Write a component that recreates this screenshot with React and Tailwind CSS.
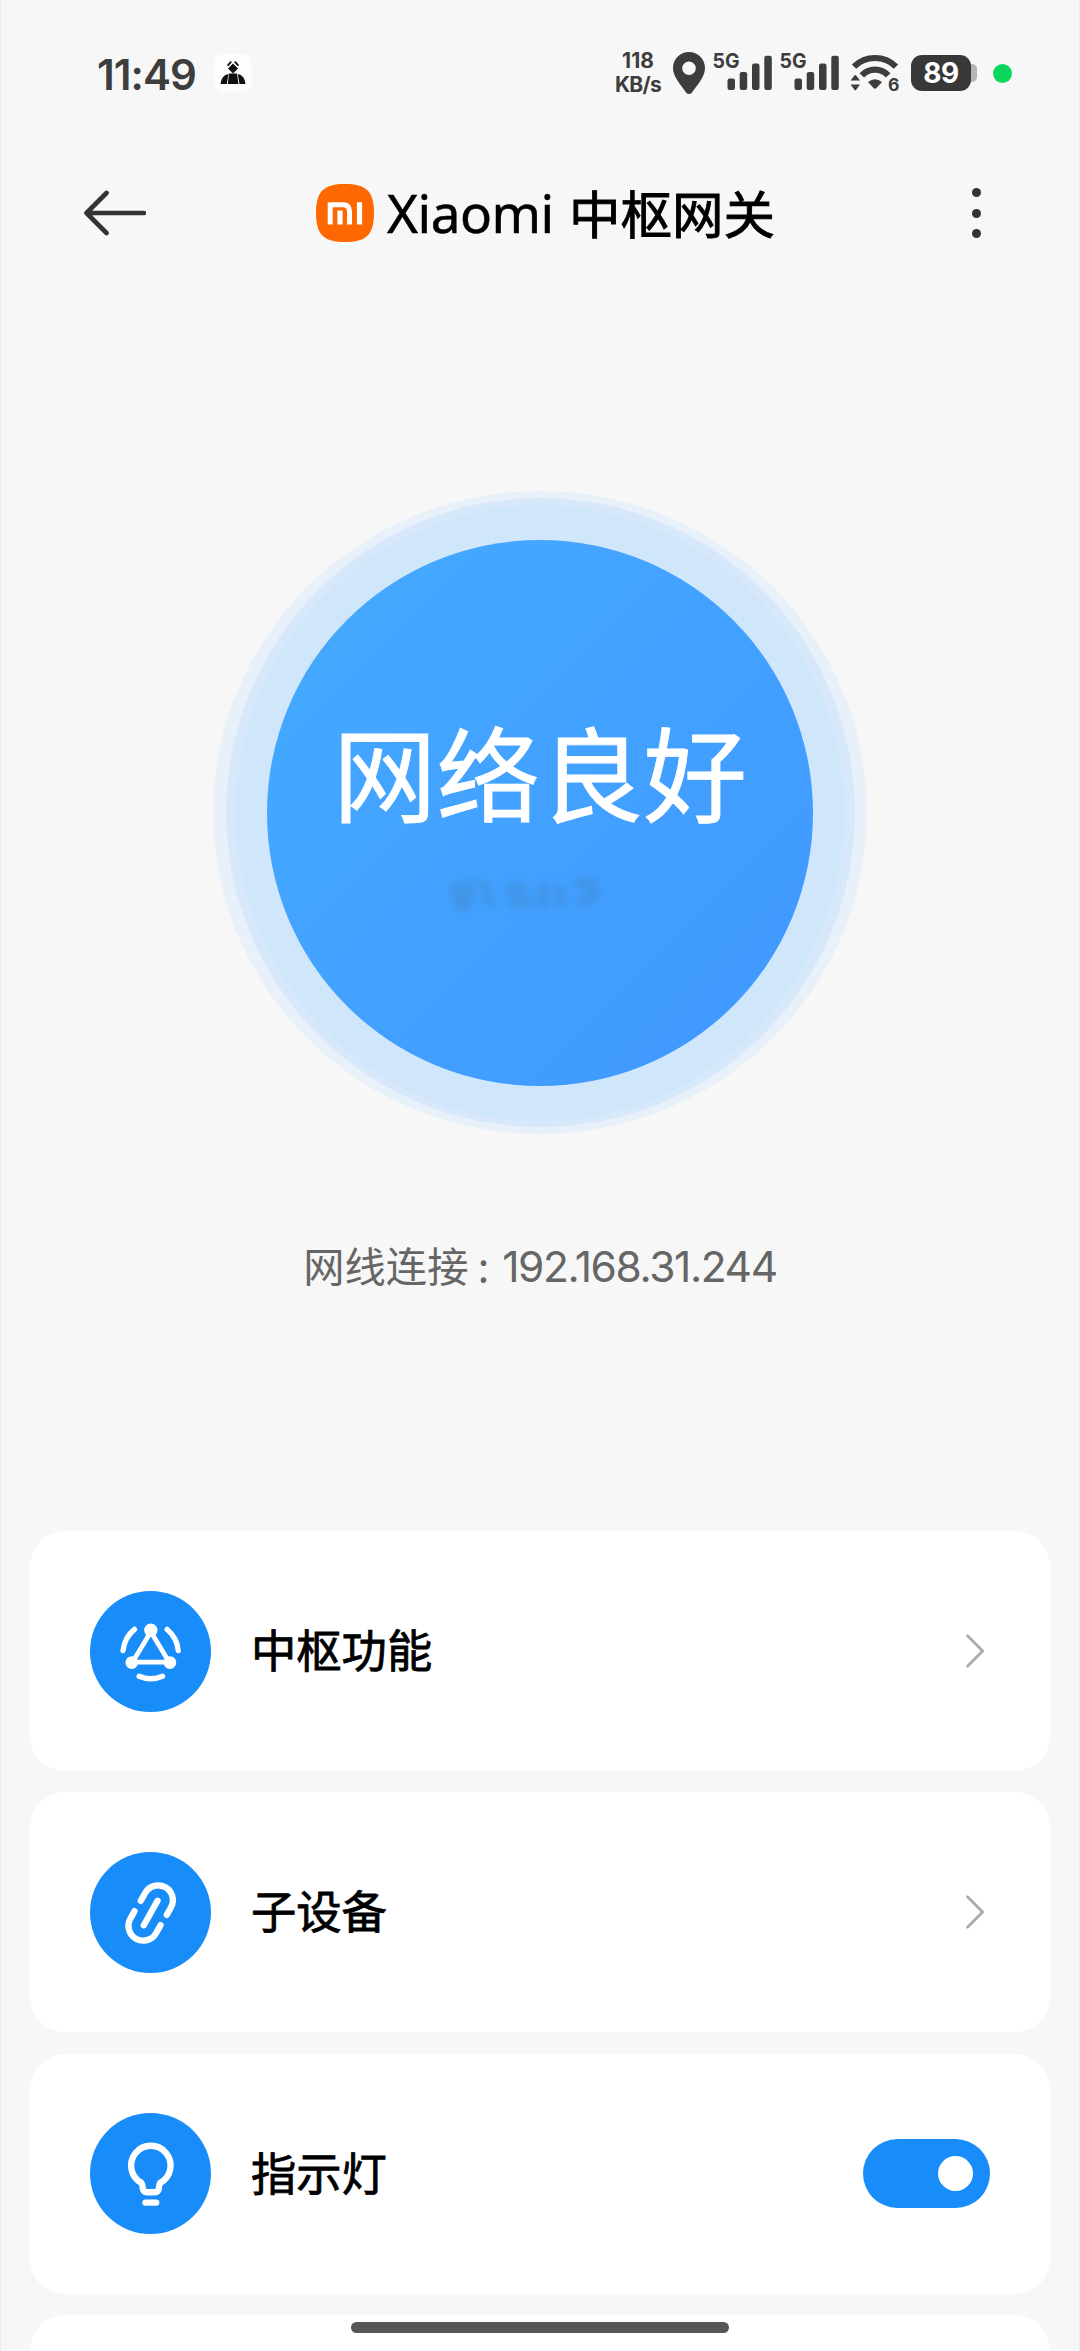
import { useState } from 'react'

function SignalIcon() {
  return (
    <svg className="w-[62px] h-[42px] overflow-visible" viewBox="0 0 62 42" fill="#3d3d3d">
      <text x="0.5" y="15.8" fontSize="20.5" fontWeight="700" textLength="27" lengthAdjust="spacingAndGlyphs" className="font-['Inter',sans-serif]">5G</text>
      <rect x="15.5" y="26.5" width="7.5" height="11.5" rx="2.2" />
      <rect x="27.7" y="20" width="7.5" height="18" rx="2.2" />
      <rect x="40" y="11.5" width="7.5" height="26.5" rx="2.2" />
      <rect x="52.3" y="3.8" width="7.5" height="34.2" rx="2.2" />
    </svg>
  )
}

function WifiIcon() {
  return (
    <svg className="w-[50px] h-[38px] ml-[9px] overflow-visible" viewBox="0 0 50 38" fill="none">
      <path d="M4 12.6 A30 30 0 0 1 46 12.6" stroke="#3d3d3d" strokeWidth="6.2" />
      <path d="M11.8 21.4 A18 18 0 0 1 38.2 21.4" stroke="#3d3d3d" strokeWidth="6.2" />
      <path d="M18 28 Q25 22.5 32 28 L26.5 34 Q25 35.4 23.5 34 Z" fill="#3d3d3d" />
      <path d="M0.6 26.5 L4.4 21.6 Q5.3 20.6 6.2 21.6 L10 26.5 Z" fill="#3d3d3d" />
      <path d="M0.6 30.5 L4.4 35.8 Q5.3 36.8 6.2 35.8 L10 30.5 Z" fill="#3d3d3d" />
      <text x="38" y="36.6" fontSize="17.5" fontWeight="700" fill="#3d3d3d" className="font-['Inter',sans-serif]">6</text>
    </svg>
  )
}

function StatusBar() {
  return (
    <div className="flex items-center h-[146px] pl-[97px] text-[#3d3d3d] font-['Inter',sans-serif]">
      <div className="w-[117px] pt-[3px] text-[42px] leading-none font-semibold tracking-[-1px] whitespace-nowrap">11:49</div>
      <div className="w-[38px] h-[38px] rounded-[10px] bg-white/80">
        <svg className="w-full h-full" viewBox="0 0 38 38" fill="#111">
          <path d="M19 9.5 L24 14.5 L19 19.5 L14 14.5 Z" />
          <path d="M13.6 11.6 L17.2 7.6 M24.4 11.6 L20.8 7.6" stroke="#111" strokeWidth="1.8" />
          <path d="M6.5 30 Q7.5 21 14.5 20 L12.8 30 Z M13.8 30 L15 19.5 H23 L24.5 30 Z M25.5 30 L23.8 20 Q30.5 21 31.5 30 Z" />
        </svg>
      </div>

      <div className="ml-[361px] w-[50px] flex flex-col items-center font-bold text-[21px] leading-[24px]">
        <span>118</span>
        <span className="tracking-[-0.7px]">KB/s</span>
      </div>
      <svg className="w-8 h-[42px] ml-[10px]" viewBox="0 0 32 42">
        <path fillRule="evenodd" fill="#3d3d3d" d="M16 0 C7 0 0 7 0 16 C0 24.5 7 32 13 40.5 Q16 43.5 19 40.5 C25 32 32 24.5 32 16 C32 7 25 0 16 0 Z M16 9.5 a6.8 6.8 0 1 1 0 13.6 a6.8 6.8 0 1 1 0 -13.6 Z" />
      </svg>
      <div className="flex gap-[5px] ml-[7px]">
        <SignalIcon />
        <SignalIcon />
      </div>
      <WifiIcon />
      <div className="ml-[11px] flex items-center">
        <div className="w-[60px] h-9 rounded-[11px] bg-[#383838] text-white font-bold text-[28px] tracking-[-0.5px] flex items-center justify-center">
          89
        </div>
        <div className="w-[6px] h-[18px] rounded-r-[5px] bg-[#b5b5b5]" />
      </div>
      <div className="ml-4 w-[19px] h-[19px] rounded-full bg-[#0bd65c]" />
    </div>
  )
}

function Header() {
  return (
    <div className="flex items-center h-[134px] pl-[84px] pr-[99px]">
      <svg className="w-[62px] h-[46px]" viewBox="0 0 62 46" fill="none" stroke="#333" strokeWidth="4.6" strokeLinecap="round" strokeLinejoin="round">
        <path d="M22.5 3 L2.5 23 L22.5 43 M2.5 23 H60" />
      </svg>
      <svg className="w-[58px] h-[58px] ml-[170px]" viewBox="0 0 58 58">
        <path d="M29 0 C50 0 58 7 58 29 C58 51 50 58 29 58 C8 58 0 51 0 29 C0 7 8 0 29 0 Z" fill="#ff6700" />
        <path d="M14.2 40.5 V20.7 H27 Q33.5 20.7 33.5 27.5 V40.5" fill="none" stroke="#fff" strokeWidth="5" />
        <path d="M24 26.5 V40.5 M43.5 18.2 V40.5" stroke="#fff" strokeWidth="5.2" />
      </svg>
      <h1 className="ml-[13px] flex items-center whitespace-nowrap text-black font-normal">
        <span className="w-[182px] text-[53px] tracking-[-0.5px] font-['Noto_Sans',sans-serif] [-webkit-text-stroke:0.5px_black]">Xiaomi</span>
        <span className="pb-[3px] text-[51.5px] font-['Noto_Sans_CJK_SC',sans-serif] [-webkit-text-stroke:0.9px_black]">中枢网关</span>
      </h1>
      <div className="ml-auto flex flex-col items-center gap-[11.5px]">
        <span className="w-[9px] h-[9px] rounded-full bg-[#333]" />
        <span className="w-[9px] h-[9px] rounded-full bg-[#333]" />
        <span className="w-[9px] h-[9px] rounded-full bg-[#333]" />
      </div>
    </div>
  )
}

function NetworkStatus() {
  return (
    <div className="mt-[211px] flex flex-col items-center">
      <div className="w-[654px] h-[643px] rounded-[50%] bg-[#e8f1fa] flex items-center justify-center">
        <div className="w-[629px] h-[629px] rounded-[50%] bg-[#d8e8fb] flex items-center justify-center">
          <div className="w-[608px] h-[616px] rounded-[50%] bg-[#d0e6fa] flex items-center justify-center">
            <div className="w-[546px] h-[546px] rounded-full bg-linear-to-br from-[#45abff] to-[#4097ff] flex flex-col items-center pt-[178px]">
              <div className="text-white text-[103.5px] leading-[104px] font-normal font-['Noto_Sans_CJK_SC',sans-serif] [-webkit-text-stroke:0.9px_white]">网络良好</div>
              <svg className="w-[170px] h-[50px] mt-[48px] mr-6 blur-[4px]" viewBox="0 0 170 50" fill="none" stroke="#4088cc" strokeWidth="9" opacity="0.55">
                <path d="M12 12 L16 38 M28 10 L22 40 M40 12 L48 36 M62 18 H84 M66 32 H90 M100 12 V38 M114 16 L120 36 M132 14 H154 M136 34 L156 22" />
              </svg>
            </div>
          </div>
        </div>
      </div>
      <div className="mt-[103px] h-[60px] flex items-center text-[#666] whitespace-nowrap">
        <span className="pb-1 text-[41.3px] font-['Noto_Sans_CJK_SC',sans-serif]">网线连接 :</span>
        <span className="ml-[13px] text-[42.5px] tracking-[-1.4px] font-['Inter',sans-serif]">192.168.31.244</span>
      </div>
    </div>
  )
}

function HubIcon() {
  return (
    <svg className="w-[121px] h-[121px]" viewBox="0 0 362 362" fill="none" stroke="#fff" strokeLinecap="round" strokeLinejoin="round">
      <path d="M182 122 L127 213 H237 Z" strokeWidth="14" />
      <path d="M133 115 Q103 139 99 178 M231 115 Q260 139 264 178 M147 255 Q182 270 217 255" strokeWidth="16" />
      <circle cx="182" cy="117" r="20" fill="#fff" stroke="none" />
      <circle cx="125" cy="214" r="19" fill="#fff" stroke="none" />
      <circle cx="239" cy="214" r="19" fill="#fff" stroke="none" />
    </svg>
  )
}

function LinkIcon() {
  return (
    <svg className="w-[121px] h-[121px]" viewBox="0 0 362 362" fill="none" stroke="#fff" strokeWidth="19" strokeLinecap="round">
      <path d="M152 146 L165.5 122 A44 44 0 0 1 242 166 L230 188" />
      <path d="M202 146 L161 219" />
      <path d="M211 219 L197.5 243 A44 44 0 0 1 121 199 L133 177" />
    </svg>
  )
}

function BulbIcon() {
  return (
    <svg className="w-[121px] h-[121px]" viewBox="0 0 362 362" fill="none" stroke="#fff" strokeWidth="19" strokeLinecap="round" strokeLinejoin="round">
      <path d="M154 209 A59 59 0 1 1 210 209 Q207 214 206 226 Q204 237 194 237 H170 Q160 237 158 226 Q157 214 154 209 Z" />
      <path d="M166 268 H198" />
    </svg>
  )
}

function Chevron() {
  return (
    <svg className="w-5 h-9 mr-[5px]" viewBox="0 0 20 36" fill="none" stroke="#aaa" strokeWidth="2.7" strokeLinecap="round" strokeLinejoin="round">
      <path d="M2.5 2.7 L17.7 18 L2.5 33.3" />
    </svg>
  )
}

function Toggle({ on, onChange }) {
  return (
    <button
      onClick={() => onChange(!on)}
      className={`w-[127px] h-[69px] rounded-full px-[17px] flex items-center ${
        on ? 'bg-[#188df9] justify-end' : 'bg-gray-300 justify-start'
      }`}
    >
      <span className="w-[35px] h-[35px] rounded-full bg-white" />
    </button>
  )
}

function Row({ icon, label, children }) {
  return (
    <div className="h-60 shrink-0 bg-white rounded-[35px] pl-[60px] pr-[60px] flex items-center">
      <div className="w-[121px] h-[121px] rounded-full bg-[#188df9]">{icon}</div>
      <div className="ml-10 pb-1 flex-1 text-[45.3px] text-black font-['Noto_Sans_CJK_SC',sans-serif] [-webkit-text-stroke:0.8px_black]">{label}</div>
      {children}
    </div>
  )
}

export default function App() {
  const [light, setLight] = useState(true)

  return (
    <div className="relative w-[1080px] h-[2351px] overflow-hidden bg-[#f7f7f7] shadow-[inset_1px_0_0_#ebebeb,inset_-1px_0_0_#ebebeb]">
      <StatusBar />
      <Header />
      <NetworkStatus />

      <div className="mt-[234px] px-[30px] flex flex-col gap-[21.33px]">
        <Row icon={<HubIcon />} label="中枢功能">
          <Chevron />
        </Row>
        <Row icon={<LinkIcon />} label="子设备">
          <Chevron />
        </Row>
        <Row icon={<BulbIcon />} label="指示灯">
          <Toggle on={light} onChange={setLight} />
        </Row>
        <div className="h-60 shrink-0 bg-white rounded-[35px]" />
      </div>

      {/* Home indicator */}
      <div className="absolute left-[351px] top-[2322px] w-[378px] h-[11px] rounded-full bg-[#575757]" />
    </div>
  )
}
